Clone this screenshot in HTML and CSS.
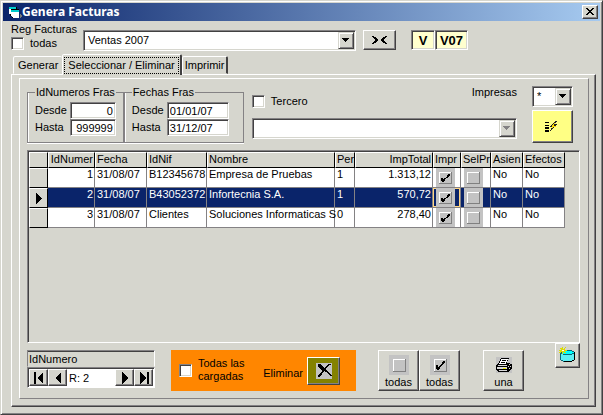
FILE: index.html
```html
<!DOCTYPE html>
<html lang="es">
<head>
<meta charset="utf-8">
<title>Genera Facturas</title>
<link rel="stylesheet" href="styles.css">
</head>
<body>
<svg class="sprites" aria-hidden="true">
  <symbol id="down" viewBox="0 0 14 15"><path d="M3 5h7v1H3zM4 6h5v1H4zM5 7h3v1H5zM6 8h1v1H6z" fill="currentColor"/></symbol>
  <symbol id="tick" viewBox="0 0 20 20"><path d="M0 0h20v20H0z" fill="#c3c3c3"/><path d="M4 4h12v1H5v11H4z" fill="#fff"/><path d="M16 4h1v13H4v-1h12z" fill="#808080"/><path d="M13 6h2v2h-1v1h-1v1h-1v1h-1v1h-1v2H9v1H7v-1H6v-4h2v2h1v-1h1v-1h1V9h1V7h1z" fill="#000"/></symbol>
  <symbol id="blank" viewBox="0 0 20 20"><path d="M0 0h20v20H0z" fill="#c3c3c3"/><path d="M4 4h12v1H5v11H4z" fill="#fff"/><path d="M16 4h1v13H4v-1h12z" fill="#808080"/></symbol>
</svg>
<main class="window">
  <header class="titlebar">
    <svg class="app-icon" viewBox="0 0 16 16" aria-hidden="true"><path d="M3 3h8v2h2v9H6v-2H4v-2H3z" fill="#000"/><path d="M3 3h7v2H3zM5 6h8v2H5z" fill="#0cc"/><path d="M3 5h2v5H3zM5 8h1v2h7v4H7v-2H5z" fill="#fff"/><path d="M6 8h7v5H6z" fill="#fff"/><path d="M14 10h1v1h1v2h-1v1h-1z" fill="#777"/></svg>
    <h1>Genera Facturas</h1>
    <button class="raised close" aria-label="Cerrar"><svg viewBox="0 0 12 10"><path d="M2 1h2v1h1v1h2V2h1V1h2v1H9v1H8v1H7v1h1v1h1v1h1v1H8V7H7V6H5v1H4v1H2V7h1V6h1V5h1V4H4V3H3V2H2z"/></svg></button>
  </header>
  <section class="top">
    <div class="reg">
      <span>Reg Facturas</span>
      <label class="check"><input type="checkbox">todas</label>
    </div>
    <div class="combo combo-reg"><select aria-label="Registro de facturas"><option>Ventas 2007</option></select><svg class="arrow"><use href="#down"/></svg></div>
    <button class="raised swap" aria-label="Cambiar"><svg viewBox="0 0 15 8"><path d="M0 0h2v1h2v1h1v1h1v2H5v1H4v1H2v1H0V7h1V6h1V5h1V3H2V2H1V1H0z"/><path d="M15 0h-2v1h-2v1h-1v1H9v2h1v1h1v1h2v1h2V7h-1V6h-1V5h-1V3h1V2h1V1h1z"/></svg></button>
    <div class="codes"><input class="code code-short" aria-label="Serie" value="V"><input class="code" aria-label="Código" value="V07"></div>
  </section>
  <nav class="tabs" role="tablist">
    <button class="tab" role="tab">Generar</button>
    <button class="tab active" role="tab" aria-selected="true"><span>Seleccionar / Eliminar</span></button>
    <button class="tab" role="tab">Imprimir</button>
  </nav>
  <section class="panel">
    <div class="frame">
      <div class="filters">
        <div class="ranges">
          <fieldset class="range">
            <legend>IdNumeros Fras</legend>
            <label>Desde<input class="num" value="0"></label>
            <label>Hasta<input class="num" value="999999"></label>
          </fieldset>
          <fieldset class="range dates">
            <legend>Fechas Fras</legend>
            <label>Desde<input value="01/01/07"></label>
            <label>Hasta<input value="31/12/07"></label>
          </fieldset>
        </div>
        <div class="third">
          <div class="third-top">
            <label class="check"><input type="checkbox">Tercero</label>
            <label for="printed">Impresas</label>
          </div>
          <div class="combo disabled"><select disabled aria-label="Tercero"><option></option></select><svg class="arrow"><use href="#down"/></svg></div>
        </div>
        <div class="actions">
          <div class="combo"><select id="printed"><option>*</option></select><svg class="arrow"><use href="#down"/></svg></div>
          <button class="raised load" aria-label="Cargar"><svg viewBox="0 0 15 11"><path d="M0 1h4v1H0zM0 4h4v1H0zM0 6h4v2H0zM0 9h4v2H0z"/><path d="M10 0h2v1h-1v1h-1v1h2v1h-1v1h-1v1H9v1H8v1H7v1H6v1H5V9h1V7h1V6H5V5h1V4h1V3h1V2h1V1h1z" fill="#222"/><path d="M9 2h1v1H9zM8 3h1v2h2v1H8v1H7V4h1z" fill="#fd0"/></svg></button>
        </div>
      </div>
      <div class="grid">
        <table>
          <colgroup><col class="c-mark"><col class="c-id"><col class="c-date"><col class="c-nif"><col class="c-name"><col class="c-per"><col class="c-total"><col class="c-impr"><col class="c-sel"><col class="c-asien"><col class="c-efec"></colgroup>
          <thead><tr><th></th><th class="r">IdNumer</th><th>Fecha</th><th>IdNif</th><th>Nombre</th><th>Per</th><th class="r">ImpTotal</th><th>Impr</th><th>SelPr</th><th>Asien</th><th>Efectos</th></tr></thead>
          <tbody>
            <tr><th></th><td class="r">1</td><td>31/08/07</td><td>B12345678</td><td>Empresa de Pruebas</td><td>1</td><td class="r">1.313,12</td><td class="pic"><svg><use href="#tick"/></svg></td><td class="pic"><svg><use href="#blank"/></svg></td><td>No</td><td>No</td></tr>
            <tr class="current"><th><svg class="pointer" viewBox="0 0 6 11"><path d="M0 0l6 5.500-6 5.500z"/></svg></th><td class="r">2</td><td>31/08/07</td><td>B43052372</td><td>Infortecnia S.A.</td><td>1</td><td class="r">570,72</td><td class="pic focus"><svg><use href="#tick"/></svg></td><td class="pic"><svg><use href="#blank"/></svg></td><td>No</td><td>No</td></tr>
            <tr><th></th><td class="r">3</td><td>31/08/07</td><td>Clientes</td><td>Soluciones Informaticas S</td><td>0</td><td class="r">278,40</td><td class="pic"><svg><use href="#tick"/></svg></td><td class="pic"><svg><use href="#blank"/></svg></td><td>No</td><td>No</td></tr>
          </tbody>
        </table>
      </div>
      <footer class="bottom">
        <div class="record">
          <div class="record-name">IdNumero</div>
          <div class="record-nav">
            <button class="raised" aria-label="Primero"><svg viewBox="0 0 12 12"><path d="M1 0h2v12H1zM10 0v12L4 6z"/></svg></button>
            <button class="raised" aria-label="Anterior"><svg viewBox="0 0 12 12"><path d="M9 0v12L3 6z"/></svg></button>
            <output>R: 2</output>
            <button class="raised" aria-label="Siguiente"><svg viewBox="0 0 12 12"><path d="M3 0v12l6-6z"/></svg></button>
            <button class="raised" aria-label="Último"><svg viewBox="0 0 12 12"><path d="M2 0v12l6-6zM9 0h2v12H9z"/></svg></button>
          </div>
        </div>
        <div class="delete">
          <label class="check"><input type="checkbox"><span>Todas las<br>cargadas</span></label>
          <label class="delete-name" for="del">Eliminar</label>
          <button class="raised" id="del"><svg viewBox="0 0 16 16"><path d="M0 0h16v16H0z" fill="#c3c3c3"/><path d="M2 1h3v1h1v1h1v1h1v1h1V4h1V3h1V2h1V1h3v1h-2v1h-1v1h-1v1h-1v2h1v1h1v1h1v1h1v1h1v1h1v1h-2v-1h-1v-1h-1v-1h-1V9H9V8H8v1H7v1H6v2H5v1H4v1H2v-2h1v-1h1v-1h1V9h1V7H5V6H4V5H3V4H2z" fill="#000"/></svg></button>
        </div>
        <div class="marks">
          <button class="raised big"><svg><use href="#blank"/></svg>todas</button>
          <button class="raised big"><svg><use href="#tick"/></svg>todas</button>
        </div>
        <button class="raised big print"><svg class="printer" viewBox="0 0 16 16"><path d="M0 0h16v16H0z" fill="#c3c3c3"/><path d="M5 1h8v1h-1v2h-1v2h3v1h2v5h-1v1h-1v1h-1v1H2v-1H1v-1H0V8h1V7h1V6h1V4h1V2h1z"/><path d="M5 2h7v1h-1v2h-1v2H3V6h1V4h1z" fill="#fff"/><path d="M6 3h4v1H6zM5 5h4v1H5z"/><path d="M2 8h9v1H2zM1 10h10v2H1zM3 13h8v1H3zM13 7h1v1h-1zM12 9h1v1h-1zM14 9h1v1h-1zM13 11h1v1h-1z" fill="#d8d8d8"/><path d="M7 11h3v1H7z" fill="#ee0"/></svg>una</button>
        <button class="raised base" aria-label="Base de datos"><svg viewBox="0 0 17 17"><path d="M5 3h8v1h2v1h1v8h-1v1h-2v1H4v-1H2v-1H1V5h4z" fill="#086878"/><path d="M2 7h2v1h9V7h2v6h-2v1H4v-1H2z" fill="#5ef0f4"/><path d="M5 4h8v1h2v1h-2v1H4V6H3V5h2z" fill="#0ff"/><path d="M15 5h1v8h-1v1h-2v1H5v-1h8v-1h2z"/><path d="M3 0h1v2h1V1h1V0h1v1H6v2h2v1H6v1h1v1H5V5H4v2H3V5H2v1H0V5h1V4H0V3h2V2H1V1h2z" fill="#dd0"/><path d="M3 3h2v1H3z" fill="#fff"/></svg></button>
      </footer>
    </div>
  </section>
</main>
</body>
</html>
```
FILE: styles.css
```css
:root {
  --face: #d6d6ce;
  --shade: #848284;
  --dark: #424142;
}
* { box-sizing: border-box; }
body {
  margin: 0;
  font: 11px/13px "Liberation Sans", Arial, sans-serif;
  color: #000;
  background: var(--face);
}
button, input, select { font: inherit; color: inherit; margin: 0; padding: 0; border-radius: 0; }
svg { display: block; flex: none; shape-rendering: crispEdges; }
.sprites { position: absolute; width: 0; height: 0; }

.window {
  min-height: 100vh;
  display: flex;
  flex-direction: column;
  padding: 1px;
  border: 1px solid;
  border-color: var(--face) var(--dark) var(--dark) var(--face);
  box-shadow: inset 1px 1px #fff, inset -1px -1px var(--shade);
}
.titlebar {
  display: flex;
  align-items: center;
  height: 18px;
  margin: 1px 1px 0;
  padding: 0 2px 0 3px;
  background: linear-gradient(90deg, #0a246a, #a6caf0);
}
.titlebar h1 {
  flex: 1;
  margin: 0;
  color: #fff;
  font: bold 12px/16px "Noto Sans", sans-serif;
}
.app-icon { width: 16px; height: 16px; }
.raised {
  display: flex;
  align-items: center;
  justify-content: center;
  background: var(--face);
  border: 1px solid;
  border-color: #fff var(--dark) var(--dark) #fff;
  box-shadow: inset -1px -1px var(--shade);
}
.close { width: 16px; height: 14px; }
.close svg { width: 12px; height: 10px; }

.top {
  display: flex;
  align-items: flex-start;
  padding: 2px 9px 0;
  height: 33px;
}
.reg { width: 72px; white-space: nowrap; }
.reg > span { display: block; }
.check { display: flex; align-items: center; gap: 6px; }
.reg .check { margin-top: 1px; }
input[type="checkbox"], .combo, .range input, .code {
  appearance: none;
  background: #fff;
  border: 1px solid;
  border-color: var(--shade) #fff #fff var(--shade);
  box-shadow: inset 1px 1px var(--dark), inset -1px -1px var(--face);
}
input[type="checkbox"] { flex: none; width: 13px; height: 13px; }

.combo { position: relative; height: 21px; padding: 2px; }
.combo select {
  display: block;
  appearance: none;
  width: 100%;
  height: 15px;
  border: 0;
  padding: 0 18px 0 2px;
  background: #fff;
}
.combo .arrow {
  position: absolute;
  top: 1px;
  right: 1px;
  width: 16px;
  height: 17px;
  pointer-events: none;
  background: var(--face);
  border: 1px solid;
  border-color: var(--face) var(--dark) var(--dark) var(--face);
  box-shadow: inset 1px 1px #fff, inset -1px -1px var(--shade);
}
.disabled { color: var(--shade); }
.combo-reg { width: 273px; margin-top: 7px; }
.swap { width: 33px; height: 20px; margin: 7px 0 0 7px; }
.swap svg { width: 15px; height: 8px; }
.codes { display: flex; margin: 7px 0 0 15px; }
.code {
  width: 33px;
  height: 20px;
  background: #ffffce;
  font: bold 13px/16px "Liberation Sans", Arial, sans-serif;
  text-align: center;
}
.code-short { width: 24px; }

.tabs { display: flex; align-items: flex-end; height: 20px; padding-left: 11px; }
.tab {
  height: 18px;
  padding: 0 4px;
  background: var(--face);
  border: 1px solid;
  border-color: #fff var(--dark) transparent #fff;
  border-radius: 2px 2px 0 0;
}
.tab:first-child { border-right-width: 0; }
.tab.active { position: relative; height: 21px; padding: 1px; margin-bottom: -1px; border-width: 1px 2px 0 1px; }
.tab.active span { display: block; padding: 1px 3px; border: 1px dotted #000; }
.tab:last-child { padding: 0 2px; border-right-width: 2px; }

.panel {
  flex: 1;
  display: flex;
  margin: 0 5px 6px 9px;
  padding: 3px 6px 7px 7px;
  border: 1px solid;
  border-color: #fff var(--dark) var(--dark) #fff;
  box-shadow: inset -1px -1px var(--shade);
}
.frame {
  flex: 1;
  display: flex;
  flex-direction: column;
  padding: 7px 8px 7px 7px;
  border: 1px solid;
  border-color: #fff var(--shade) var(--shade) #fff;
}
.filters { display: flex; align-items: flex-start; }
.ranges { display: flex; }
.range {
  width: 96px;
  height: 57px;
  margin: 0;
  padding: 3px 7px 0;
  border: 1px solid var(--shade);
  box-shadow: inset 1px 0 #fff, 0 1px #fff;
}
.range legend { padding: 0 1px; white-space: nowrap; }
.range label { display: flex; align-items: center; justify-content: space-between; }
.range input { width: 46px; height: 17px; padding: 0 2px; }
.range input.num { text-align: right; }
.dates { width: 120px; padding-right: 14px; }
.dates input { width: 62px; }
.third { flex: 1; padding: 0 15px 0 8px; }
.third-top { display: flex; justify-content: space-between; height: 32px; }
.third-top .check { height: 31px; }
.actions { width: 41px; margin-right: 7px; }
.load { width: 41px; height: 33px; margin-top: 3px; background: #ffff84; }
.load svg { width: 15px; height: 11px; }

.grid {
  flex: 1;
  margin-top: 7px;
  border: 1px solid;
  border-color: var(--shade) #fff #fff var(--shade);
  box-shadow: inset 1px 1px var(--dark);
  padding: 1px;
}
table { border-collapse: separate; border-spacing: 0; table-layout: fixed; width: 536px; }
.c-mark { width: 19px; }
.c-id { width: 47px; }
.c-date { width: 52px; }
.c-nif { width: 60px; }
.c-name { width: 128px; }
.c-per { width: 20px; }
.c-total { width: 78px; }
.c-impr { width: 28px; }
.c-sel { width: 30px; }
.c-asien { width: 32px; }
.c-efec { width: 42px; }
th, td {
  height: 20px;
  padding: 0 0 0 2px;
  text-align: left;
  vertical-align: top;
  font-weight: normal;
  white-space: nowrap;
}
th {
  background: var(--face);
  border: 1px solid;
  border-color: #fff #000 #000 #fff;
}
thead th { height: 16px; padding: 0 0 0 1px; }
td { background: #fff; border: solid var(--shade); border-width: 0 1px 1px 0; }
td.r, thead th.r { padding-right: 1px; text-align: right; }
tbody th { vertical-align: middle; }
.pointer { width: 6px; height: 11px; margin-left: 4px; }
.current td { background: #0a246a; color: #fff; }
td.pic { padding: 0 2px; }
.pic svg { width: 20px; height: 19px; }
.current .focus { box-shadow: inset 0 0 0 1px #ffd684; }

.bottom { display: flex; align-items: flex-start; }
.record, .delete, .marks, .print { margin-top: 7px; }
.record { width: 128px; }
.record-name {
  height: 17px;
  padding: 2px 1px 0;
  border: 1px solid;
  border-color: var(--shade) #fff var(--face) var(--shade);
  box-shadow: inset 0 1px var(--dark);
}
.record-nav {
  display: flex;
  height: 21px;
  padding: 1px;
  background: #fff;
  border: 1px solid;
  border-color: var(--shade) #fff #fff var(--shade);
  box-shadow: inset 1px 1px var(--dark);
}
.record-nav button { width: 19px; }
.record-nav svg { width: 12px; height: 12px; }
.record-nav output { flex: 1; padding: 3px 2px 0; }
.delete {
  display: flex;
  align-items: center;
  width: 185px;
  height: 41px;
  margin-left: 16px;
  padding: 0 16px 0 8px;
  background: #ff8600;
}
.delete .check { margin-bottom: 1px; }
.delete-name { flex: 1; padding: 5px 4px 0 0; text-align: right; }
.delete button { width: 33px; height: 28px; background: #848200; }
.delete button svg { width: 16px; height: 16px; }
.marks { display: flex; margin-left: auto; }
.big { width: 41px; height: 41px; flex-direction: column; gap: 1px; padding-top: 2px; }
.big svg { width: 20px; height: 20px; }
.big svg.printer { width: 16px; height: 16px; margin: 2px; }
.print { margin-left: 23px; }
.base { width: 25px; height: 25px; margin-left: 31px; }
.base svg { width: 17px; height: 17px; }
```
